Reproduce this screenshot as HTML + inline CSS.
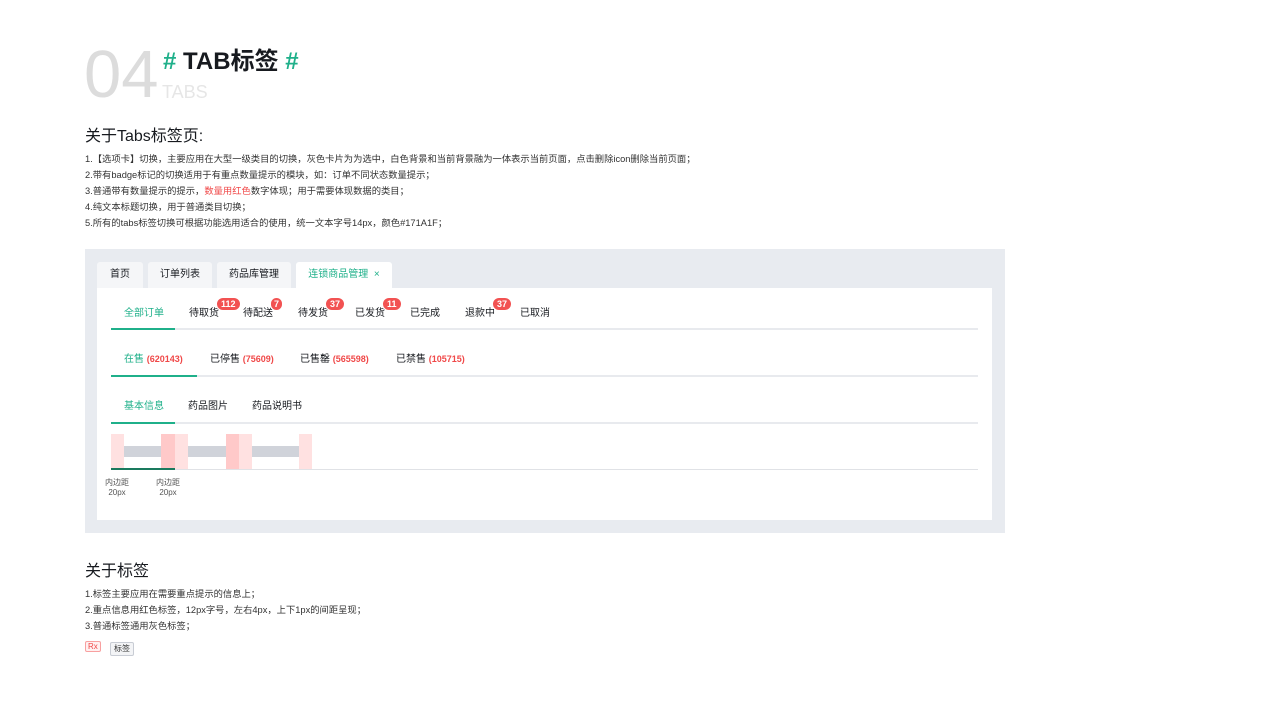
<!DOCTYPE html>
<html><head><meta charset="utf-8"><style>
body{margin:0;width:1280px;height:720px;background:#fff;position:relative;overflow:hidden;font-family:"Liberation Sans","Noto Sans CJK SC",sans-serif;color:#171a1f}
.a{position:absolute;white-space:nowrap}
.s{font-size:9.3px;color:#333}
.t{font-size:10px}
.g{color:#1fb08a}
.r{color:#f04848;font-weight:bold}
.b{position:absolute;background:#f25252;color:#fff;font-size:9px;font-weight:bold;border-radius:7px;height:12px;line-height:12px;padding:0 4px;border:1px solid #fff}
.tab{position:absolute;top:262px;height:26px;background:#f5f6f8;border-radius:3px 3px 0 0;font-size:10px;line-height:26px;text-align:center}
.ln{position:absolute;left:111px;width:867px;height:2px;background:#e8eaee}
.ul{position:absolute;left:111px;height:2px;background:#1fb08a}
</style></head><body>
<div class="a" style="left:84px;top:38px;font-size:67px;color:#dcdcdc;font-weight:300;line-height:74px">04</div>
<div class="a" style="left:162px;top:80px;font-size:18px;color:#e6e6e6;line-height:24px">TABS</div>
<div class="a" style="left:163px;top:47px;font-size:24px;font-weight:bold;line-height:30px"><span class="g">#</span> TAB标签 <span class="g">#</span></div>
<div class="a" style="left:85px;top:127px;font-size:16px;line-height:20px">关于Tabs标签页:</div>
<div class="a s" style="left:85px;top:151px;line-height:16px">1.【选项卡】切换，主要应用在大型一级类目的切换，灰色卡片为为选中，白色背景和当前背景融为一体表示当前页面，点击删除icon删除当前页面；<br>2.带有badge标记的切换适用于有重点数量提示的模块，如：订单不同状态数量提示；<br>3.普通带有数量提示的提示，<span style="color:#f04848">数量用红色</span>数字体现；用于需要体现数据的类目；<br>4.纯文本标题切换，用于普通类目切换；<br>5.所有的tabs标签切换可根据功能选用适合的使用，统一文本字号14px，颜色#171A1F；</div>

<div class="a" style="left:85px;top:249px;width:920px;height:284px;background:#e8ebf0"></div>
<div class="a" style="left:97px;top:288px;width:895px;height:232px;background:#fff"></div>
<div class="tab" style="left:97px;width:46px">首页</div>
<div class="tab" style="left:148px;width:64px">订单列表</div>
<div class="tab" style="left:217px;width:74px">药品库管理</div>
<div class="tab g" style="left:296px;width:96px;background:#fff">连锁商品管理 &nbsp;×</div>

<div class="a t" style="top:304px;left:124px"><span class="g">全部订单</span></div>
<div class="a t" style="top:304px;left:189px">待取货</div>
<div class="a t" style="top:304px;left:243px">待配送</div>
<div class="a t" style="top:304px;left:298px">待发货</div>
<div class="a t" style="top:304px;left:355px">已发货</div>
<div class="a t" style="top:304px;left:410px">已完成</div>
<div class="a t" style="top:304px;left:465px">退款中</div>
<div class="a t" style="top:304px;left:520px">已取消</div>
<div class="b" style="left:216px;top:297px">112</div>
<div class="b" style="left:270px;top:297px;padding:0 3px">7</div>
<div class="b" style="left:325px;top:297px">37</div>
<div class="b" style="left:382px;top:297px">11</div>
<div class="b" style="left:492px;top:297px">37</div>
<div class="ln" style="top:328px"></div><div class="ul" style="top:328px;width:64px"></div>

<div class="a t" style="top:350px;left:124px"><span class="g">在售</span> <span class="r" style="font-size:9px">(620143)</span></div>
<div class="a t" style="top:350px;left:210px">已停售 <span class="r" style="font-size:9px">(75609)</span></div>
<div class="a t" style="top:350px;left:300px">已售罄 <span class="r" style="font-size:9px">(565598)</span></div>
<div class="a t" style="top:350px;left:396px">已禁售 <span class="r" style="font-size:9px">(105715)</span></div>
<div class="ln" style="top:375px"></div><div class="ul" style="top:375px;width:86px"></div>

<div class="a t" style="top:397px;left:124px"><span class="g">基本信息</span></div>
<div class="a t" style="top:397px;left:188px">药品图片</div>
<div class="a t" style="top:397px;left:252px">药品说明书</div>
<div class="ln" style="top:422px"></div><div class="ul" style="top:422px;width:64px"></div>

<div class="a" style="left:124px;top:446px;width:188px;height:11px;background:#d0d3da"></div>
<div class="a" style="left:111px;top:434px;width:13px;height:35px;background:#ffe1e1"></div>
<div class="a" style="left:161px;top:434px;width:14px;height:35px;background:#ffc9c9"></div>
<div class="a" style="left:175px;top:434px;width:13px;height:35px;background:#ffe1e1"></div>
<div class="a" style="left:226px;top:434px;width:13px;height:35px;background:#ffc9c9"></div>
<div class="a" style="left:239px;top:434px;width:13px;height:35px;background:#ffe1e1"></div>
<div class="a" style="left:299px;top:434px;width:13px;height:35px;background:#ffe1e1"></div>
<div class="a" style="left:111px;top:469px;width:867px;height:1px;background:#e0e2e6"></div>
<div class="a" style="left:111px;top:468px;width:64px;height:2px;background:#1a7a5e"></div>
<div class="a" style="left:105px;top:478px;font-size:8px;color:#555;text-align:center;line-height:10px">内边距<br>20px</div>
<div class="a" style="left:156px;top:478px;font-size:8px;color:#555;text-align:center;line-height:10px">内边距<br>20px</div>

<div class="a" style="left:85px;top:562px;font-size:16px;line-height:20px">关于标签</div>
<div class="a s" style="left:85px;top:586px;line-height:16px">1.标签主要应用在需要重点提示的信息上；<br>2.重点信息用红色标签，12px字号，左右4px，上下1px的间距呈现；<br>3.普通标签通用灰色标签；</div>
<div class="a" style="left:85px;top:641px;font-size:8px;color:#f04848;border:1px solid #f8a0a0;background:#fff0f0;padding:0 2px;line-height:9px;border-radius:2px">Rx</div>
<div class="a" style="left:110px;top:642px;font-size:8px;color:#333;border:1px solid #c8ccd4;background:#f3f4f6;padding:1px 3px;line-height:10px;border-radius:2px">标签</div>
</body></html>
